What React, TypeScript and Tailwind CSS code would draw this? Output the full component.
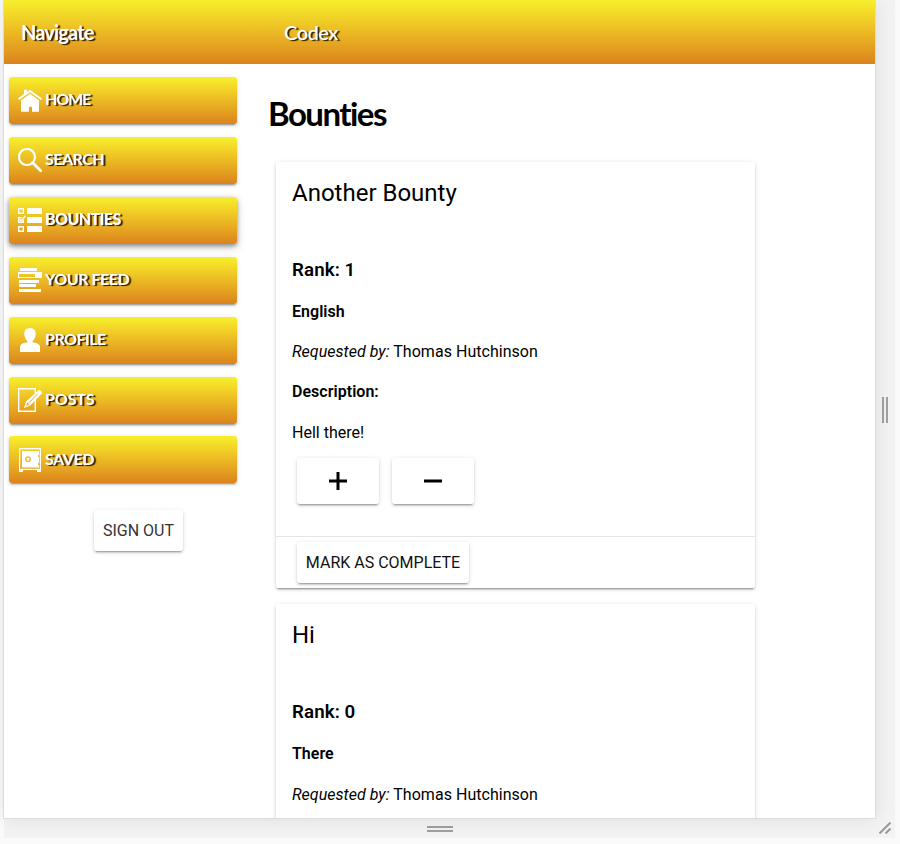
import type { ReactNode } from "react";

const GOLD = "bg-linear-to-b from-[#f7f02b] to-[#db831d]";
const RAISED =
  "shadow-[0_3px_1px_-2px_rgba(0,0,0,0.2),0_2px_2px_0_rgba(0,0,0,0.14),0_1px_5px_0_rgba(0,0,0,0.12)]";
const DISPLAY = "font-[Lato,sans-serif]";
const LETTER_SHADOW = "[text-shadow:2px_1px_1px_rgba(0,0,0,0.85)]";

function Icon({ children }: { children: ReactNode }) {
  return (
    <svg width="24" height="24" viewBox="0 0 24 24" fill="white" className="block shrink-0">
      {children}
    </svg>
  );
}

const icons = {
  home: (
    <Icon>
      <g transform="translate(0 0.8)">
        <path d="M6 5V1h3v2.400L12 1l12 8.700-1 1.500L12 3.500 1 11.200l-1-1.500z" />
        <path d="M12 5l9 6.500V23h-7v-5h-3v5H3V11.500z" />
      </g>
    </Icon>
  ),
  search: (
    <Icon>
      <circle cx="9" cy="9" r="8" fill="none" stroke="white" strokeWidth="2.200" />
      <path d="M14.500 14.500L22.700 22.700" stroke="white" strokeWidth="2.900" strokeLinecap="round" />
    </Icon>
  ),
  list: (
    <Icon>
      <path d="M9 0h15v6H9zM9 9h15v6H9zM9 18h15v6H9z" />
      <g fill="none" stroke="white" strokeWidth="1.400">
        <path d="M.7.7h4.600v4.600H.7zM5.300 12v2.300H.7V9.700h3M.7 18.700h4.600v4.600H.7z" />
        <path d="M1.800 11.200l1.500 1.800L7.300 8" />
      </g>
    </Icon>
  ),
  feed: (
    <Icon>
      <path d="M2 0h17v3H2zM1 12h20v3H1zM1 16h17v3H1zM1 21h22v3H1z" />
      <path fillRule="evenodd" d="M0 4h24v6H0zM1 6v3h16V6z" />
    </Icon>
  ),
  person: (
    <Icon>
      <path d="M12 0c4 0 6 2.800 5.700 6.600-.2 3-1.500 5.300-3.200 6.500v1.200c3.500.6 7.500 1.200 7.500 5V24H2v-4.700c0-3.800 4-4.400 7.500-5v-1.200C7.800 11.900 6.500 9.600 6.300 6.600 6 2.800 8 0 12 0z" />
    </Icon>
  ),
  edit: (
    <Icon>
      <path d="M17.300 11v12.300H.7V.7h16.600V5" fill="none" stroke="white" strokeWidth="1.400" />
      <path
        fillRule="evenodd"
        d="M20.500 2.200c1-1 4.300 2 3.300 3.200L12.200 17.600 6 20l2-6.500zM9.300 14.200l-1.100 3.600 3.300-1.300z"
      />
      <path d="M11 14.800l8.800-9.200" stroke="#e6b125" strokeWidth="1" />
    </Icon>
  ),
  safe: (
    <Icon>
      <path fillRule="evenodd" d="M1 0h22v24h-4v-2H5v2H1zM2.200 1.200v19.600h19.600V1.200z" />
      <path
        fillRule="evenodd"
        d="M4 3h17v4h-1v2h1v6h-1v2h1v2.500H4zM10 8.300a2.900 2.900 0 1 0 0 5.800 2.900 2.900 0 0 0 0-5.800zM10 9.600a1.600 1.600 0 1 1 0 3.200 1.600 1.600 0 0 1 0-3.200z"
      />
    </Icon>
  ),
};

const links = [
  { label: "HOME", icon: icons.home, width: "tracking-[-1.1px]" },
  { label: "SEARCH", icon: icons.search, width: "tracking-[-0.5px]" },
  { label: "BOUNTIES", icon: icons.list, width: "tracking-[-0.6px]", active: true },
  { label: "YOUR FEED", icon: icons.feed, width: "tracking-[-0.45px]" },
  { label: "PROFILE", icon: icons.person, width: "tracking-[-0.5px]" },
  { label: "POSTS", icon: icons.edit, width: "tracking-[-0.1px]" },
  { label: "SAVED", icon: icons.safe, width: "tracking-[-0.45px]" },
];

type BountyProps = { title: string; rank: number; language: string; description?: string };

function Bounty({ title, rank, language, description }: BountyProps) {
  return (
    <article className={`h-[426px] w-[479px] shrink-0 rounded-[2px] bg-white ${RAISED}`}>
      <div className="flex h-[374px] flex-col items-start px-4">
        <h2 className="mt-4 text-[24px] leading-[30px]">{title}</h2>
        <h3 className="mt-[50px] text-[18.72px] leading-6 font-semibold tracking-[0.1px]">Rank: {rank}</h3>
        <h4 className="mt-[18px] text-base leading-6 font-semibold tracking-[0.03px]">{language}</h4>
        <p className={`text-base leading-6 tracking-[0.03px] ${description ? "mt-4" : "mt-[17px]"}`}>
          <em>Requested by:</em> Thomas Hutchinson
        </p>
        {description && (
          <>
            <h4 className="mt-4 text-base leading-6 font-semibold tracking-[0.03px]">Description:</h4>
            <p className="mt-[17px] text-base leading-6">{description}</p>
            <div className="mt-[13px] ml-[5px] flex gap-[13px]">
              <button className={`flex h-[46px] w-[82px] items-center justify-center rounded-[3px] bg-white ${RAISED}`} aria-label="Increase rank">
                <svg width="18" height="18" viewBox="0 0 18 18">
                  <path d="M0 9h18M9 0v18" stroke="black" strokeWidth="3" />
                </svg>
              </button>
              <button className={`flex h-[46px] w-[82px] items-center justify-center rounded-[3px] bg-white ${RAISED}`} aria-label="Decrease rank">
                <svg width="18" height="18" viewBox="0 0 18 18">
                  <path d="M0 9h18" stroke="black" strokeWidth="3" />
                </svg>
              </button>
            </div>
          </>
        )}
      </div>
      {description && (
        <div className="flex h-[52px] border-t border-[#e5e5e5] pt-[5px] pl-[21px]">
          <button className={`h-[41px] w-[172px] rounded-[3px] bg-white text-base text-[#111] ${RAISED}`}>MARK AS COMPLETE</button>
        </div>
      )}
    </article>
  );
}

export default function App() {
  return (
    <div className="grid h-[844px] w-[900px] grid-cols-[871px_20px] grid-rows-[818px_20px] overflow-hidden bg-[#fafafa] pl-1 font-[Roboto,sans-serif] text-black">
      <div className="z-10 flex flex-col bg-white shadow-[0_0_0_1px_#dcdcdc,0_0_20px_rgba(0,0,0,0.1)]">
        <header className={`flex h-16 shrink-0 items-center text-[20px] text-white ${GOLD} ${DISPLAY} ${LETTER_SHADOW}`}>
          <span className="w-[263px] pb-px pl-[17px] font-bold tracking-[-0.85px]">Navigate</span>
          <span className="pb-px pl-[17px] font-medium tracking-[-0.5px]">Codex</span>
        </header>
        <div className="flex h-[754px] overflow-hidden">
          <nav className="flex w-[263px] shrink-0 flex-col pt-[13px] pl-[5px]">
            {links.map((link) => (
              <a
                key={link.label}
                className={`mb-[13px] flex h-[47px] w-[228px] shrink-0 pt-[11px] pl-[9px] text-base leading-[22px] text-white last-of-type:-mt-px last-of-type:pt-3 ${DISPLAY} ${LETTER_SHADOW} ${GOLD} rounded-[3px] ${link.width} ${
                  link.active
                    ? "font-black shadow-[0_2px_4px_rgba(0,0,0,0.35),0_3px_10px_rgba(0,0,0,0.2)]"
                    : `font-bold ${RAISED}`
                }`}
              >
                {link.icon}
                <span className="ml-[3px]">{link.label}</span>
              </a>
            ))}
            <button className={`mt-[14px] ml-[85px] h-[41px] w-[89px] shrink-0 rounded-[3px] bg-white text-base text-[#333] ${RAISED}`}>
              SIGN OUT
            </button>
          </nav>
          <main className="flex flex-col">
            <h1 className={`mt-[26px] ml-[1px] text-[33px] leading-[46px] font-bold tracking-[-1.55px] ${DISPLAY}`}>Bounties</h1>
            <div className="mt-[26px] ml-[9px] flex flex-col gap-4">
              <Bounty title="Another Bounty" rank={1} language="English" description="Hell there!" />
              <Bounty title="Hi" rank={0} language="There" />
            </div>
          </main>
        </div>
      </div>
      <div className="flex items-center justify-center gap-[2px] bg-[#f3f3f3] pt-[2px]">
        <i className="block h-[26px] w-[2px] bg-[#a0a0a0]" />
        <i className="block h-[26px] w-[2px] bg-[#a0a0a0]" />
      </div>
      <div className="flex flex-col items-center justify-center gap-[2px] bg-[#f3f3f3] pt-[2px]">
        <i className="block h-[2px] w-[26px] bg-[#a0a0a0]" />
        <i className="block h-[2px] w-[26px] bg-[#a0a0a0]" />
      </div>
      <div className="flex items-center justify-center bg-[#f3f3f3]">
        <svg width="12" height="12" viewBox="0 0 12 12" fill="none" stroke="#999" strokeWidth="2">
          <path d="M.5 11.500L11.500.5M6.500 11.500l5-5" />
        </svg>
      </div>
    </div>
  );
}
